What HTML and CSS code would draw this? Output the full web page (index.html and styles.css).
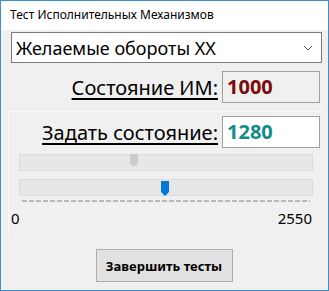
FILE: index.html
```html
<!DOCTYPE html>
<html>
<head>
  <meta charset="UTF-8">
  <title>Тест Исполнительных Механизмов</title>
  <link rel="stylesheet" href="styles.css">
</head>
<body>
  <div class="window">
    <div class="titlebar">Тест Исполнительных Механизмов</div>
    <div class="content">
      <div class="combo">
        <span>Желаемые обороты XX</span>
        <svg class="chevron" width="10" height="6" viewBox="0 0 10 6">
          <path d="M1 1 L5 5 L9 1" fill="none" stroke="#555" stroke-width="1"/>
        </svg>
      </div>

      <div class="row state-row">
        <span class="label">Состояние ИМ:</span>
        <div class="value readonly">1000</div>
      </div>

      <div class="panel">
        <div class="row set-row">
          <span class="label">Задать состояние:</span>
          <div class="value editable">1280</div>
        </div>

        <div class="slider disabled">
          <div class="thumb gray"></div>
        </div>
        <div class="slider">
          <div class="thumb blue">
            <svg width="8" height="15" viewBox="0 0 8 15">
              <path d="M0 0 H8 V11 L4 15 L0 11 Z" fill="#0078d7"/>
            </svg>
          </div>
        </div>
        <div class="ticks"></div>

        <div class="scale">
          <span>0</span>
          <span>2550</span>
        </div>
      </div>

      <div class="actions">
        <button class="finish-button">Завершить тесты</button>
      </div>
    </div>
  </div>
</body>
</html>
```

FILE: styles.css
```css
body {
  margin: 0;
  font-family: "Noto Sans", "Open Sans", sans-serif;
  color: #000;
}

.window {
  width: 329px;
  height: 291px;
  box-sizing: border-box;
  border: 1px solid #3c8dcf;
  background-color: #f0f0f0;
  display: flex;
  flex-direction: column;
}

.titlebar {
  height: 29px;
  box-sizing: border-box;
  padding: 5px 0 0 9px;
  font-size: 12px;
  background-color: #fff;
}

.content {
  flex: 1;
  display: flex;
  flex-direction: column;
  padding: 2px 0 0 4px;
  border-left: 1px solid #f8f8f8;
}

.combo {
  height: 31px;
  margin: 0 6px 0 5px;
  box-sizing: border-box;
  border: 1px solid #7a7a7a;
  background-color: #fff;
  display: flex;
  align-items: center;
  justify-content: space-between;
  padding: 0 8px 0 4px;
  font-size: 18px;
}

.row {
  display: flex;
  align-items: center;
  justify-content: flex-end;
  gap: 4px;
  padding-right: 8px;
}

.state-row {
  margin-top: 8px;
}

.label {
  font-size: 20px;
  text-decoration: underline;
  text-underline-offset: 3px;
}

.value {
  width: 98px;
  height: 32px;
  box-sizing: border-box;
  border: 1px solid #a0a0a0;
  padding-left: 4px;
  font-size: 20px;
  font-weight: bold;
  line-height: 30px;
}

.readonly {
  background-color: #f0f0f0;
  color: #7a0c0c;
}

.editable {
  background-color: #fff;
  color: #158a8a;
}

.panel {
  margin: 8px 6px 0 2px;
  border-top: 1px solid #fafafa;
  border-left: 1px solid #fafafa;
  padding: 4px 0 0 0;
  height: 120px;
  display: flex;
  flex-direction: column;
}

.panel .row {
  padding-right: 2px;
}

.slider {
  position: relative;
  height: 15px;
  margin: 6px 9px 0 10px;
  background-color: #e7e7e7;
  border: 1px solid #dcdcdc;
}

.slider + .slider {
  margin-top: 8px;
}

.thumb {
  position: absolute;
  top: -1px;
}

.thumb.gray {
  left: 110px;
  width: 8px;
  height: 12px;
  background-color: #cccccc;
  border-radius: 0 0 4px 4px;
}

.thumb.blue {
  left: 141px;
  height: 15px;
}

.ticks {
  height: 2px;
  margin: 4px 12px 0 13px;
  background-image: repeating-linear-gradient(90deg, #b8b8b8 0 5px, transparent 5px 7px);
}

.scale {
  display: flex;
  justify-content: space-between;
  margin: 6px 10px 0 2px;
  font-size: 15px;
}

.actions {
  display: flex;
  justify-content: center;
  padding: 13px 0 0 0;
  margin-left: -6px;
}

.finish-button {
  width: 137px;
  height: 33px;
  background-color: #e1e1e1;
  border: 1px solid #adadad;
  font-family: "Noto Sans", sans-serif;
  font-weight: bold;
  font-size: 13px;
}
```
